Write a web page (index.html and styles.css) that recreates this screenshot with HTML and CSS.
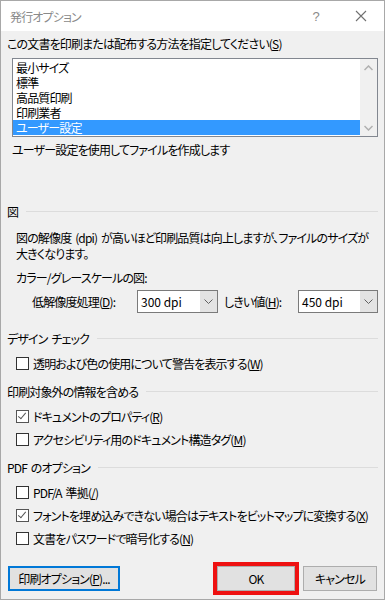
FILE: index.html
```html
<!DOCTYPE html>
<html lang="ja">
  <head>
    <meta charset="utf-8">
    <title>発行オプション</title>
    <link rel="stylesheet" href="styles.css">
  </head>
  <body>
    <div class="dialog">
      <div class="titlebar">
        <span class="title">発行オプション</span>
        <span class="help">?</span>
        <svg class="close" width="12" height="12" viewBox="0 0 12 12">
          <path d="M1 1 L11 11 M11 1 L1 11" stroke="#707070" stroke-width="1.1" fill="none" />
        </svg>
      </div>

      <div class="content">
        <div class="label">この文書を印刷または配布する方法を指定してください(<u>S</u>)</div>

        <div class="listbox">
          <ul class="items">
            <li>最小サイズ</li>
            <li>標準</li>
            <li>高品質印刷</li>
            <li>印刷業者</li>
            <li class="selected">ユーザー設定</li>
          </ul>
          <div class="scrollbar">
            <svg width="9" height="6" viewBox="0 0 9 6">
              <polyline points="0.5,5 4.5,1 8.5,5" stroke="#b0b0b0" stroke-width="1.5" fill="none" />
            </svg>
            <svg width="9" height="6" viewBox="0 0 9 6">
              <polyline points="0.5,1 4.5,5 8.5,1" stroke="#b0b0b0" stroke-width="1.5" fill="none" />
            </svg>
          </div>
        </div>

        <div class="desc">ユーザー設定を使用してファイルを作成します</div>

        <section class="group group-image">
          <div class="group-head">図</div>
          <p class="note">図の解像度 (dpi) が高いほど印刷品質は向上しますが、ファイルのサイズが<br>大きくなります。</p>
          <div class="sub-label">カラー/グレースケールの図:</div>
          <div class="dpi-row">
            <span class="dpi-label">低解像度処理(<u>D</u>):</span>
            <div class="select">
              <span class="value">300 dpi</span>
              <span class="arrow">
                <svg width="9" height="5" viewBox="0 0 9 5">
                  <polyline points="0.5,0.5 4.5,4.5 8.5,0.5" stroke="#606060" stroke-width="1" fill="none" />
                </svg>
              </span>
            </div>
            <span class="dpi-label second">しきい値(<u>H</u>):</span>
            <div class="select">
              <span class="value">450 dpi</span>
              <span class="arrow">
                <svg width="9" height="5" viewBox="0 0 9 5">
                  <polyline points="0.5,0.5 4.5,4.5 8.5,0.5" stroke="#606060" stroke-width="1" fill="none" />
                </svg>
              </span>
            </div>
          </div>
        </section>

        <section class="group">
          <div class="group-head">デザイン チェック</div>
          <div class="check"><span class="box"></span>透明および色の使用について警告を表示する(<u>W</u>)</div>
        </section>

        <section class="group">
          <div class="group-head">印刷対象外の情報を含める</div>
          <div class="check checked"><span class="box"></span>ドキュメントのプロパティ(<u>R</u>)</div>
          <div class="check"><span class="box"></span>アクセシビリティ用のドキュメント構造タグ(<u>M</u>)</div>
        </section>

        <section class="group">
          <div class="group-head">PDF のオプション</div>
          <div class="check"><span class="box"></span>PDF/A 準拠(<u>/</u>)</div>
          <div class="check checked"><span class="box"></span>フォントを埋め込みできない場合はテキストをビットマップに変換する(<u>X</u>)</div>
          <div class="check"><span class="box"></span>文書をパスワードで暗号化する(<u>N</u>)</div>
        </section>

        <div class="buttons">
          <button class="btn btn-print">印刷オプション(<u>P</u>)...</button>
          <button class="btn btn-ok">OK</button>
          <button class="btn btn-cancel">キャンセル</button>
        </div>
      </div>
    </div>
  </body>
</html>
```

FILE: styles.css
```css
body {
  margin: 0;
  padding: 0;
  font-family: "Noto Sans CJK JP", "Noto Sans", sans-serif;
  font-feature-settings: "palt";
  font-size: 12px;
  letter-spacing: -0.85px;
  word-spacing: 2px;
  color: #000;
  background: #f0f0f0;
}

.dialog {
  width: 385px;
  height: 600px;
  box-sizing: border-box;
  border: 1px solid #a8a8a8;
  background: #f0f0f0;
  display: flex;
  flex-direction: column;
}

.titlebar {
  height: 30px;
  background: #fff;
  display: flex;
  align-items: center;
  padding-left: 9px;
}

.title {
  flex: 1;
  color: #8a8a8a;
  font-size: 12px;
}

.help {
  color: #8a8a8a;
  font-family: "Liberation Sans", sans-serif;
  font-size: 13px;
  margin-right: 36px;
}

.close {
  margin-right: 17px;
}

.content {
  padding: 5px 6px 0 6px;
}

.label,
.desc,
.group-head,
.sub-label {
  line-height: 16px;
  white-space: nowrap;
}

.listbox {
  margin: 6px 0 0 5px;
  height: 79px;
  box-sizing: border-box;
  border: 1px solid #828790;
  background: #fff;
  display: flex;
}

.items {
  flex: 1;
  list-style: none;
  margin: 0;
  padding: 1px 0 0 0;
}

.items li {
  height: 15px;
  line-height: 15px;
  padding-left: 3px;
  white-space: nowrap;
}

.items li.selected {
  background: #3399ff;
  color: #fff;
}

.scrollbar {
  width: 17px;
  background: #f0f0f0;
  display: flex;
  flex-direction: column;
  justify-content: space-between;
  align-items: center;
  padding: 6px 0 5px;
  box-sizing: border-box;
}

.scrollbar svg {
  display: block;
}

.desc {
  margin-top: 5px;
  padding-left: 5px;
}

.group + .group {
  margin-top: 9px;
}

.group-image {
  margin-top: 46px;
}

.group-image + .group {
  margin-top: 18px;
}

.group-head {
  display: flex;
  align-items: center;
}

.group-head::after {
  content: "";
  flex: 1;
  border-top: 1px solid #dcdcdc;
  margin-left: 8px;
  margin-top: -2px;
}

.note {
  margin: 10px 0 0 9px;
  line-height: 16px;
  white-space: nowrap;
}

.sub-label {
  margin: 8px 0 0 9px;
}

.dpi-row {
  margin-top: 4px;
  height: 23px;
  padding-left: 25px;
  display: flex;
  align-items: center;
}

.dpi-label {
  width: 105px;
  flex-shrink: 0;
  white-space: nowrap;
}

.dpi-label.second {
  width: 74px;
  margin-left: 6px;
}

.select {
  width: 81px;
  height: 23px;
  flex-shrink: 0;
  box-sizing: border-box;
  border: 1px solid #7a7a7a;
  background: #fff;
  display: flex;
}

.select + .dpi-label + .select {
  width: 80px;
}

.select .value {
  flex: 1;
  padding-left: 3px;
  line-height: 21px;
  letter-spacing: 0;
  word-spacing: 0;
}

.select .arrow {
  width: 17px;
  background: #e3e3e3;
  display: flex;
  align-items: center;
  justify-content: center;
}

.check {
  height: 23px;
  padding-left: 9px;
  display: flex;
  align-items: center;
  white-space: nowrap;
}

.group-head + .check {
  margin-top: 5px;
}

.box {
  width: 13px;
  height: 13px;
  flex-shrink: 0;
  box-sizing: border-box;
  border: 1px solid #333;
  background: #fff;
  margin-right: 4px;
  position: relative;
}

.checked .box {
  border-color: #555;
}

.checked .box::after {
  content: "";
  position: absolute;
  left: 3px;
  top: 0px;
  width: 3px;
  height: 7px;
  border-right: 1.5px solid #555;
  border-bottom: 1.5px solid #555;
  transform: rotate(40deg);
}

.buttons {
  margin-top: 16px;
  display: flex;
}

.btn {
  height: 25px;
  box-sizing: border-box;
  border: 1px solid #adadad;
  background: #e1e1e1;
  font-family: inherit;
  font-feature-settings: "palt";
  font-size: 12px;
  letter-spacing: -0.85px;
  color: #000;
  padding: 0;
}

.btn-print {
  width: 112px;
  margin-left: 1px;
  border: 2px solid #0078d7;
}

.btn-ok {
  width: 78px;
  margin-left: auto;
  outline: 4px solid #ee1111;
}

.btn-cancel {
  width: 74px;
  margin-left: 8px;
  margin-right: 1px;
}
```
